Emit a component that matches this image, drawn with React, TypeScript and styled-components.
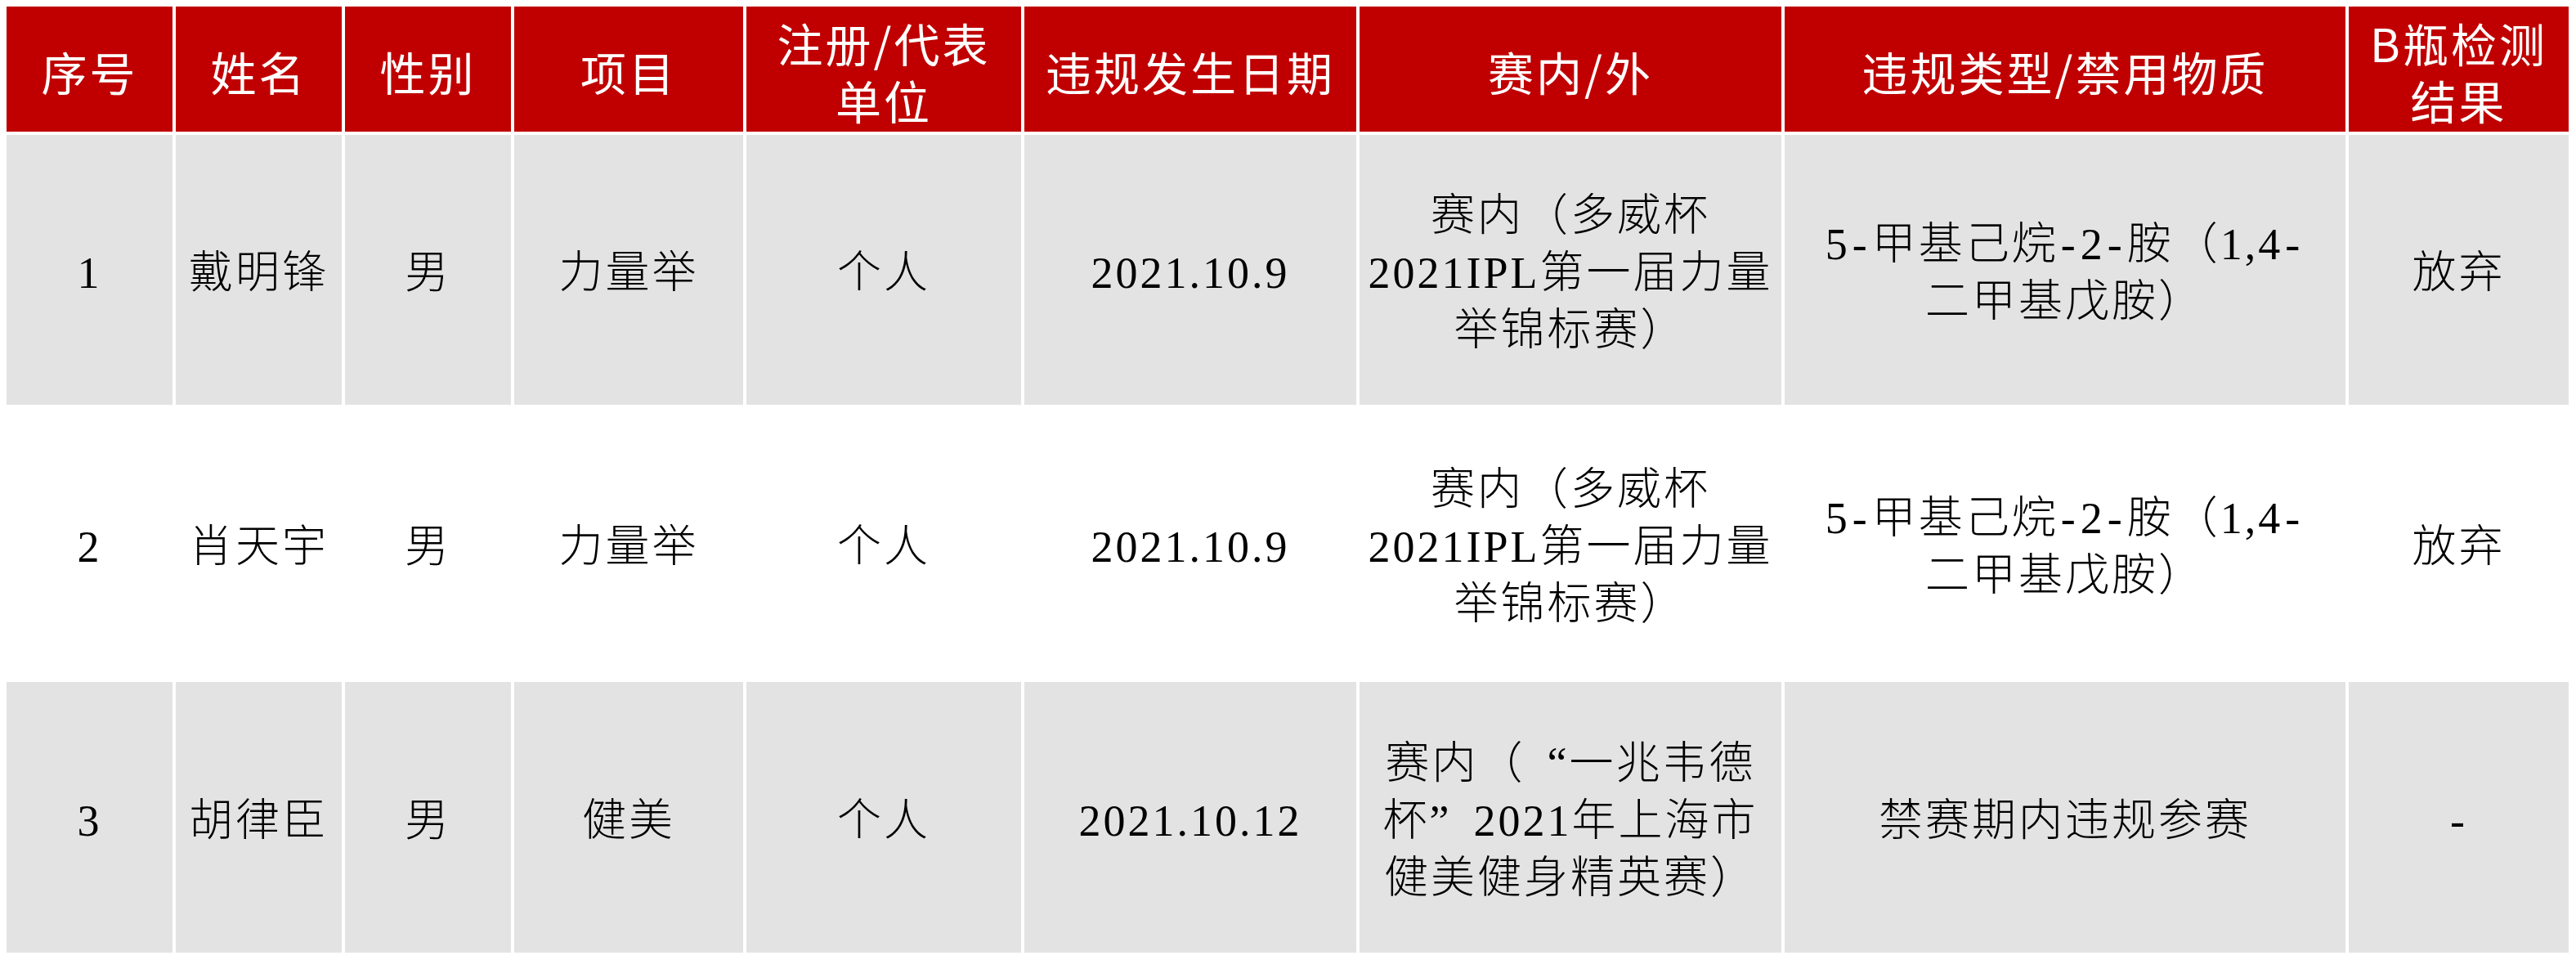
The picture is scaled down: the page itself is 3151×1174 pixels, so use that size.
import React from 'react';
import styled, { createGlobalStyle } from 'styled-components';

const GlobalStyle = createGlobalStyle`
  body {
    margin: 8px;
    background: #fff;
    font-family: 'Liberation Serif', 'Noto Sans CJK SC', serif;
  }
`;

const Sheet = styled.div`
  display: grid;
  grid-template-columns: 203px 203px 203px 280px 336px 406px 516px 686px 269px;
  grid-template-rows: 153px 330px 331px 331px;
  gap: 4px;
  width: 3134px;
  background: #fff;
`;

const HeadCell = styled.div`
  display: flex;
  align-items: center;
  justify-content: center;
  text-align: center;
  padding-top: 4px;
  background: #c00000;
  color: #fff;
  font-family: 'Noto Sans CJK SC', sans-serif;
  font-size: 56px;
  font-weight: 400;
  line-height: 70px;
  letter-spacing: 3px;
`;

const Cell = styled.div<{ $shaded: boolean }>`
  display: flex;
  align-items: center;
  justify-content: center;
  text-align: center;
  padding-top: 8px;
  background: ${(p) => (p.$shaded ? '#e3e3e3' : '#fff')};
  color: #000;
  font-size: 54px;
  font-weight: 300;
  line-height: 70px;
  letter-spacing: 3px;
  white-space: nowrap;
`;

// half-width slot for ascii marks, as in the original sheet
const Dash = styled.span`
  display: inline-block;
  width: 27px;
  text-align: center;
`;

const Quote = styled.span<{ $open?: boolean }>`
  display: inline-block;
  width: 54px;
  text-align: ${(p) => (p.$open ? 'right' : 'left')};
  font-family: 'Liberation Serif', serif;
`;

const heads: React.ReactNode[] = [
  '序号',
  '姓名',
  '性别',
  '项目',
  <>注册/代表<br />单位</>,
  '违规发生日期',
  '赛内/外',
  '违规类型/禁用物质',
  <>B瓶检测<br />结果</>,
];

const drugs = (
  <>
    5<Dash>-</Dash>甲基己烷<Dash>-</Dash>2<Dash>-</Dash>胺（1,4<Dash>-</Dash>
    <br />
    二甲基戊胺）
  </>
);
const ipl = <>赛内（多威杯<br />2021IPL第一届力量<br />举锦标赛）</>;

const rows: React.ReactNode[][] = [
  ['1', '戴明锋', '男', '力量举', '个人', '2021.10.9', ipl, drugs, '放弃'],
  ['2', '肖天宇', '男', '力量举', '个人', '2021.10.9', ipl, drugs, '放弃'],
  [
    '3',
    '胡律臣',
    '男',
    '健美',
    '个人',
    '2021.10.12',
    <>
      赛内（<Quote $open>“</Quote>一兆韦德<br />
      杯<Quote>”</Quote>2021年上海市<br />
      健美健身精英赛）
    </>,
    '禁赛期内违规参赛',
    '-',
  ],
];

export default function App() {
  return (
    <>
      <GlobalStyle />
      <Sheet>
        {heads.map((h, i) => (
          <HeadCell key={'h' + i}>
            <div>{h}</div>
          </HeadCell>
        ))}
        {rows.map((row, r) =>
          row.map((c, i) => (
            <Cell key={r + '-' + i} $shaded={r !== 1}>
              <div>{c}</div>
            </Cell>
          ))
        )}
      </Sheet>
    </>
  );
}
